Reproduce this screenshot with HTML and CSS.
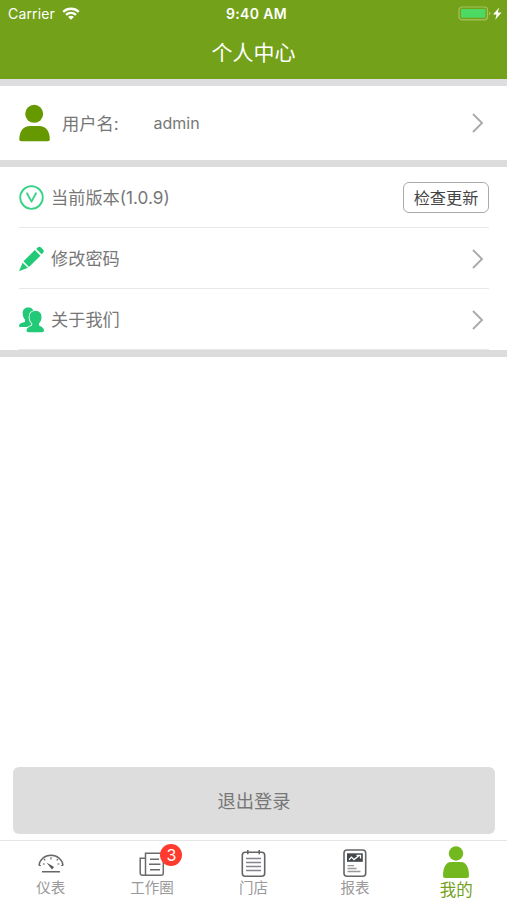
FILE: index.html
```html
<!DOCTYPE html>
<html lang="zh-CN">
<head>
<meta charset="utf-8">
<title>个人中心</title>
<link rel="stylesheet" href="styles.css">
</head>
<body>
<div class="screen">
  <header class="header">
    <div class="status">
      <div class="carrier"><span>Carrier</span>
        <svg width="18" height="13" viewBox="0 0 18 13" fill="none" stroke="#fff" stroke-width="2.3"><path d="M1.2 4.8C5.5.7 12.5.7 16.8 4.8M4 7.9c2.8-2.6 7.2-2.6 10 0"/><path d="M9 12.8 6.1 9.9c1.6-1.5 4.2-1.5 5.8 0z" fill="#fff" stroke="none"/></svg>
      </div>
      <div class="time">9:40 AM</div>
      <div class="power">
        <svg width="46" height="16" viewBox="0 0 46 16"><rect x="1" y="1" width="28.500" height="12.800" rx="3" fill="none" stroke="#a5c45e" stroke-width="1.200"/><rect x="3" y="3" width="24.500" height="8.800" rx="1" fill="#4cd964"/><path d="M31 5.400v4q1.400-.5 1.400-2t-1.400-2z" fill="#a5c45e"/><path d="M41.200 1.500 35 8.500h3.500l-1.200 5.200 6.200-7.200h-3.700z" fill="#fff"/></svg>
      </div>
    </div>
    <h1 class="title">个人中心</h1>
  </header>
  <section class="profile">
    <svg class="avatar" width="32" height="38" viewBox="0 0 32 38" fill="#690"><circle cx="15.200" cy="9.800" r="9"/><path d="M.3 35.500C.3 27 4.500 22 11 22h9.200c6.500 0 10.600 5 10.600 13.500q0 1.800-1.800 1.800H2.100Q.3 37.300.3 35.500z"/></svg>
    <span class="name-label">用户名:</span><span class="name">admin</span>
    <svg class="arrow" width="12" height="20" viewBox="0 0 12 20"><path d="m1 1 9 9-9 9"/></svg>
  </section>
  <section class="list">
    <div class="row">
      <svg class="icon" width="26" height="26" viewBox="0 0 26 26" fill="none" stroke="#36d286"><circle cx="12.500" cy="12.500" r="11.300" stroke-width="1.800"/><path d="m8 8.200 4.500 8.400 4.500-8.400" stroke-width="1.800" stroke-linejoin="round" stroke-linecap="round"/></svg>
      <span class="label">当前版本(1.0.9)</span><button class="update">检查更新</button>
    </div>
    <div class="row">
      <svg class="icon" width="26" height="26" viewBox="0 0 26 26" fill="#22ca77"><path d="M15.800 4.100 21.400 9.700 10 20.900 4.500 15.300zM17.200 2.900l1.200-1.200q1.700-1.700 3.700-.1l1.900 1.900q1.600 1.900 0 3.500l-1.300 1.300zM3.600 16.700l5.300 5.100L0 25.300z"/></svg>
      <span class="label">修改密码</span>
      <svg class="arrow" width="12" height="20" viewBox="0 0 12 20"><path d="m1 1 9 9-9 9"/></svg>
    </div>
    <div class="row">
      <svg class="icon" width="26" height="26" viewBox="0 0 26 26" fill="#22ca77"><path d="M3.700 6.500C3.700 2.400 6 .5 9.300.5s5.500 1.900 5.500 6c0 2.700-1.200 4.700-2.500 6v2c0 1.400 5.700 1.200 5.700 5.400H1.300Q0 19.900 0 19c0-3.800 6-3.100 6-4.500v-2c-1.300-1.300-2.300-3.300-2.300-6z"/><path d="M10.500 10.200c0-4.300 2.500-6.100 6-6.100s6 1.800 6 6.100c0 2.800-1 4.800-2.500 6v1.700c0 1.600 5 1.400 5 5.700 0 1.300-.8 1.700-2 1.700H9.800c-1.500 0-2.300-.5-2.300-1.700 0-4.300 5.700-4.100 5.700-5.700v-1.700c-1.500-1.200-2.700-3.200-2.700-6z" stroke="#fff" stroke-width="1.700" paint-order="stroke"/></svg>
      <span class="label">关于我们</span>
      <svg class="arrow" width="12" height="20" viewBox="0 0 12 20"><path d="m1 1 9 9-9 9"/></svg>
    </div>
  </section>
  <main class="content"><button class="logout">退出登录</button></main>
  <nav class="tabs">
    <a class="tab">
      <svg width="30" height="32" viewBox="0 0 30 32" fill="none" stroke="#666" stroke-width="1.300"><path d="M3 20.500c.5-5.700 5.500-10.200 12-10.200s11.500 4.500 12 10.200M6 26.700h18" stroke-width="1.500"/><path d="M3 20.500h2M27 20.500h-2M15 12v2.500M8 14l1.300 1.300M22 14l-1.300 1.300M6.800 19h2M21.500 19h2" stroke-width="1.100"/><path d="m10.500 17.500 7.500 4.500-2 2.500z" fill="#555" stroke="none"/></svg>
      <span>仪表</span>
    </a>
    <a class="tab">
      <svg width="30" height="32" viewBox="0 0 30 32" fill="none" stroke="#6b6b6b" stroke-width="1.500"><path d="M8.500 30.200V8.200h17.800v19.700q0 2.300-2.300 2.300H5.500q-2.300 0-2.300-2.300V13.200h5.300M13 14.300h9M12 19.300h11.500M13 24.800h10"/></svg>
      <span>工作圈</span><b class="badge">3</b>
    </a>
    <a class="tab">
      <svg width="30" height="32" viewBox="0 0 30 32" fill="none" stroke="#656565" stroke-width="1.600"><rect x="4.300" y="7.200" width="22.400" height="24" rx="3"/><path d="M9.800 5v4.300M21.200 5v4.300"/><path stroke="#858590" stroke-width="1.400" d="M8 13.500h15M8 17.500h15M8 21.500h15M8 25.500h15"/></svg>
      <span>门店</span>
    </a>
    <a class="tab">
      <svg width="30" height="32" viewBox="0 0 30 32" fill="none" stroke="#656565" stroke-width="1.600"><rect x="4" y="5" width="21.700" height="26.200" rx="3"/><path d="M7 8.300h15.800v8.500H7z" fill="#42474c" stroke="none"/><path d="m9 14.800 2.500-2.700 2.500 2.500 5.500-4.300m-3 0h4v3.300" stroke="#fff" stroke-width="1.300"/><path d="M7.500 20.700h6.500M7.500 23.500h9M7.500 26.500h13" stroke="#999" stroke-width="1.300"/></svg>
      <span>报表</span>
    </a>
    <a class="tab active">
      <svg width="30" height="34" viewBox="0 0 30 34" fill="#74b820"><circle cx="15" cy="8.500" r="7.200"/><path d="M2 31C2 21.500 5.500 17 10 17h10c4.500 0 8 4.500 8 14q0 2-2.300 2H4.300Q2 33 2 31z"/></svg>
      <span>我的</span>
    </a>
  </nav>
</div>
</body>
</html>
```

FILE: styles.css
```css
* { box-sizing: border-box; }
body {
  margin: 0;
  background: #fff;
  color: #777;
  font-family: Inter, "Noto Sans CJK SC", sans-serif;
  font-size: 17px;
}
button { padding: 0; font: inherit; }
svg { display: block; flex: none; }
.screen { height: 900px; display: flex; flex-direction: column; overflow: hidden; }
.header { height: 79px; flex: none; background: #73a119; color: #fff; }
.status {
  height: 27px;
  padding: 0 3px 0 8px;
  display: grid;
  grid-template-columns: 1fr auto 1fr;
  align-items: center;
  font-size: 14px;
  line-height: 26px;
}
.carrier { display: flex; align-items: center; gap: 7px; letter-spacing: .15px; }
.carrier svg { margin-bottom: 1px; }
.time { font-size: 14px; font-weight: 600; letter-spacing: .35px; margin-left: 1px; }
.power { justify-self: end; }
.title { margin: 0; text-align: center; font-size: 21px; line-height: 52px; font-weight: 400; }
.profile {
  height: 88px;
  flex: none;
  display: flex;
  align-items: center;
  padding: 0 23px 0 19px;
  border-top: 7px solid #dedee0;
  border-bottom: 7px solid #dcdcdc;
}
.name-label { margin-left: 11px; width: 91.500px; padding-bottom: 2px; font-size: 17.300px; }
.name { font-size: 16px; }
.arrow { margin-left: auto; fill: none; stroke: #aaa; stroke-width: 1.900; }
.list { height: 190px; flex: none; border-bottom: 7px solid #dcdcdc; padding: 0 18px 0 19px; }
.row { height: 61px; display: flex; align-items: center; border-bottom: 1px solid #e8e8e8; padding: 1px 5px 0 0; }
.icon { margin-right: 6px; }
.label { font-size: 17.200px; padding-bottom: 2px; }
.update {
  width: 86px;
  height: 31px;
  margin-left: auto;
  margin-right: -5px;
  padding-bottom: 1px;
  border: 1.500px solid #aaa;
  border-radius: 6px;
  background: #fff;
  color: #444;
  font-size: 16.200px;
}
.content { flex: 1; display: flex; align-items: flex-end; padding: 0 12px 6px 13px; }
.logout { width: 100%; height: 67px; padding-bottom: 2px; border: 0; border-radius: 6px; background: #ddd; color: #777; font-size: 18.300px; }
.tabs { height: 60px; flex: none; border-top: 1px solid #e5e5e5; display: grid; grid-template-columns: repeat(5, 1fr); }
.tab { position: relative; display: flex; flex-direction: column; align-items: center; height: 59px; padding-top: 4px; color: #999; font-size: 14.500px; line-height: 20px; }
.tab svg { margin-bottom: 1px; }
.active { color: #73a119; font-size: 16.500px; }
.badge {
  position: absolute;
  top: 3px;
  left: 59px;
  width: 22px;
  height: 22px;
  border-radius: 50%;
  background: #ff3b30;
  color: #fff;
  font-size: 16px;
  font-weight: 400;
  line-height: 22px;
  text-align: center;
}
```
